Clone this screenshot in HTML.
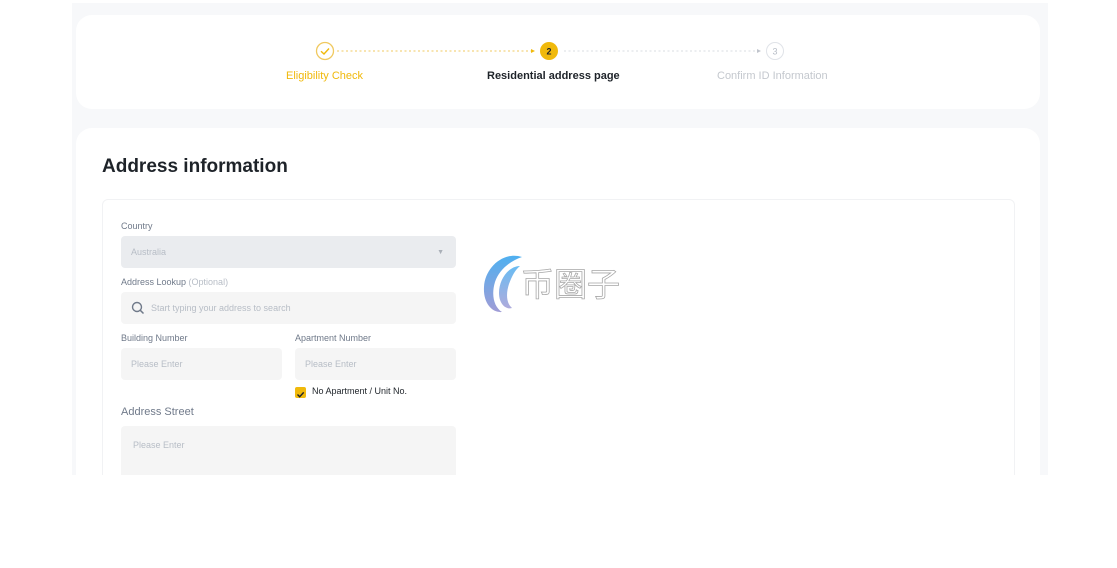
<!DOCTYPE html>
<html><head><meta charset="utf-8"><style>
*{box-sizing:border-box;margin:0;padding:0}
body{width:1117px;height:568px;background:#fff;font-family:"Liberation Sans","Noto Sans CJK SC",sans-serif;position:relative;overflow:hidden}
.bg{position:absolute;left:72px;top:3px;width:976px;height:472px;background:#f7f8fa}
.card{position:absolute;background:#fff;border-radius:16px}
.t{position:absolute;white-space:nowrap}
.lbl{font-size:9px;color:#707a8a}
.inp{position:absolute;background:#f5f5f5;border-radius:4px;font-size:9px;color:#b7bdc6;padding-left:10px;display:flex;align-items:center}
</style></head><body>
<div class="bg"></div>
<div class="card" style="left:76px;top:15px;width:964px;height:94px"></div>
<div class="card" style="left:76px;top:128px;width:964px;height:360px;border-radius:16px 16px 0 0"></div>
<!-- stepper -->
<svg style="position:absolute;left:300px;top:40px" width="500" height="22">
<circle cx="25" cy="11" r="8.5" fill="#fff" stroke="#f0c960" stroke-width="1.3"/>
<path d="M21 11.2 L24 14 L29 8.5" fill="none" stroke="#f0b90b" stroke-width="1.4"/>
<line x1="37" y1="11" x2="232" y2="11" stroke="#f0c960" stroke-dasharray="2 2.5"/>
<path d="M231 9 L235 11 L231 13Z" fill="#f0b90b"/>
<circle cx="249" cy="11" r="9" fill="#f0b90b"/>
<text x="249" y="14.5" font-size="9" font-weight="bold" text-anchor="middle" fill="#1e2329" font-family="Liberation Sans">2</text>
<line x1="264" y1="11" x2="458" y2="11" stroke="#d8dce1" stroke-dasharray="2 2.5"/>
<path d="M457 9 L461 11 L457 13Z" fill="#c0c4cc"/>
<circle cx="475" cy="11" r="8.5" fill="#fff" stroke="#e0e3e8"/>
<text x="475" y="14.5" font-size="9" text-anchor="middle" fill="#b7bdc6" font-family="Liberation Sans">3</text>
</svg>
<div class="t" style="left:286px;top:70px;font-size:11px;color:#f0b90b">Eligibility Check</div>
<div class="t" style="left:487px;top:70px;font-size:11px;font-weight:bold;color:#1e2329">Residential address page</div>
<div class="t" style="left:717px;top:70px;font-size:11px;color:#c4c8ce">Confirm ID Information</div>
<div class="t" style="left:102px;top:156px;font-size:19px;font-weight:bold;color:#1e2329">Address information</div>
<div style="position:absolute;left:102px;top:199px;width:913px;height:290px;border:1px solid #f1f2f4;border-radius:6px"></div>
<div class="t lbl" style="left:121px;top:221px">Country</div>
<div class="inp" style="left:121px;top:236px;width:335px;height:32px;background:#eaecef;color:#b7bdc6">Australia<span style="position:absolute;right:12px;font-size:7px;color:#aab0b8">▼</span></div>
<div class="t lbl" style="left:121px;top:277px">Address Lookup <span style="color:#b7bdc6">(Optional)</span></div>
<div class="inp" style="left:121px;top:292px;width:335px;height:32px;padding-left:30px">Start typing your address to search
<svg style="position:absolute;left:10px;top:9px" width="14" height="14"><circle cx="6" cy="6" r="4.5" fill="none" stroke="#707a8a" stroke-width="1.4"/><line x1="9.3" y1="9.3" x2="12.5" y2="12.5" stroke="#707a8a" stroke-width="1.5"/></svg></div>
<div class="t lbl" style="left:121px;top:333px">Building Number</div>
<div class="t lbl" style="left:295px;top:333px">Apartment Number</div>
<div class="inp" style="left:121px;top:348px;width:161px;height:32px">Please Enter</div>
<div class="inp" style="left:295px;top:348px;width:161px;height:32px">Please Enter</div>
<div style="position:absolute;left:295px;top:387px;width:11px;height:11px;background:#f0b90b;border-radius:2px"><svg width="11" height="11"><path d="M2.5 5.5 L4.7 7.7 L8.7 3.4" fill="none" stroke="#1e2329" stroke-width="1.4"/></svg></div>
<div class="t" style="left:312px;top:386px;font-size:9px;color:#1e2329">No Apartment / Unit No.</div>
<div class="t" style="left:121px;top:406px;font-size:11px;color:#707a8a">Address Street</div>
<div class="inp" style="left:121px;top:426px;width:335px;height:60px;align-items:flex-start;padding:14px 0 0 12px">Please Enter</div>
<!-- watermark -->
<svg style="position:absolute;left:482px;top:253px" width="42" height="62">
<defs><linearGradient id="g" x1="0" y1="0" x2="0" y2="1"><stop offset="0" stop-color="#4fb0f0"/><stop offset="1" stop-color="#a09cd6"/></linearGradient></defs>
<path d="M40 4 C22 -2 3 14 2 34 C1 50 10 60 20 59 C12 54 9 42 13 29 C17 17 28 8 40 4Z" fill="url(#g)"/>
<path d="M38 13 C27 13 17 26 17 40 C17 51 24 57 30 55 C24 50 24 40 27 31 C30 23 33 17 38 13Z" fill="url(#g)" opacity="0.85"/>
</svg>
<div class="t" style="left:521px;top:262px;font-size:33px;line-height:40px;color:#fff;-webkit-text-stroke:0.8px #a8a8a8;font-family:'Noto Sans CJK SC',sans-serif;letter-spacing:0px">币圈子</div>
<div style="position:absolute;left:0;top:475px;width:1117px;height:93px;background:#fff"></div>
</body></html>
